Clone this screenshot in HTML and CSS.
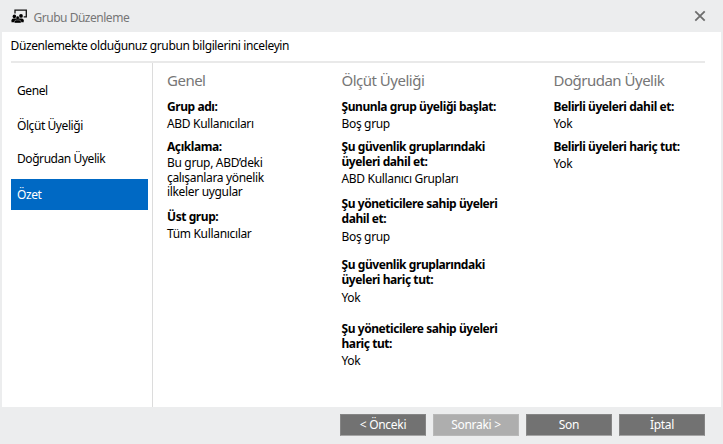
FILE: index.html
```html
<!DOCTYPE html>
<html lang="tr">
<head>
<meta charset="utf-8">
<title>Grubu Düzenleme</title>
<link rel="stylesheet" href="styles.css">
</head>
<body>
<div class="dialog">
  <header class="titlebar">
    <svg class="group-icon" width="17" height="16" viewBox="0 0 17 16">
      <path d="M4 5.5V2.2H15.3v6.6h-2.6" fill="none" stroke="#111" stroke-width="1.3"/>
      <circle cx="3.4" cy="8.4" r="1.8"/><circle cx="10" cy="7.9" r="1.9"/><circle cx="6.7" cy="9.8" r="1.7" stroke="#ecedee" stroke-width=".4"/>
      <path d="M.5 14.2v-2Q.6 10.6 2.3 10.6h8.6q1.7 0 1.8 1.6v2z"/>
      <path d="M3.4 15v-1.2q.2-1.8 2-1.8h2.6q1.8 0 2 1.8V15z" stroke="#ecedee" stroke-width=".4"/>
    </svg>
    <h1>Grubu Düzenleme</h1>
    <svg class="close" width="12" height="12" viewBox="0 0 12 12"><path d="M1.3 1.3l9.4 9.4M10.7 1.3l-9.4 9.4" stroke="#6d6d6d" stroke-width="1.8"/></svg>
  </header>
  <main class="content">
    <p class="intro">Düzenlemekte olduğunuz grubun bilgilerini inceleyin</p>
    <div class="body">
      <nav>
        <a class="general">Genel</a>
        <a class="criteria">Ölçüt Üyeliği</a>
        <a class="direct">Doğrudan Üyelik</a>
        <a class="selected">Özet</a>
      </nav>
      <section class="col-general">
        <h2>Genel</h2>
        <dl><dt>Grup adı:</dt><dd>ABD Kullanıcıları</dd></dl>
        <dl><dt>Açıklama:</dt><dd class="multi">Bu grup, ABD’deki<br>çalışanlara yönelik<br>ilkeler uygular</dd></dl>
        <dl><dt>Üst grup:</dt><dd>Tüm Kullanıcılar</dd></dl>
      </section>
      <section class="col-criteria">
        <h2>Ölçüt Üyeliği</h2>
        <dl><dt>Şununla grup üyeliği başlat:</dt><dd>Boş grup</dd></dl>
        <dl class="include"><dt>Şu güvenlik gruplarındaki<br>üyeleri dahil et:</dt><dd>ABD Kullanıcı Grupları</dd></dl>
        <dl class="managers"><dt>Şu yöneticilere sahip üyeleri<br>dahil et:</dt><dd>Boş grup</dd></dl>
        <dl class="exclude"><dt>Şu güvenlik gruplarındaki<br>üyeleri hariç tut:</dt><dd>Yok</dd></dl>
        <dl class="exclude-managers"><dt>Şu yöneticilere sahip üyeleri<br>hariç tut:</dt><dd>Yok</dd></dl>
      </section>
      <section class="col-direct">
        <h2>Doğrudan Üyelik</h2>
        <dl><dt>Belirli üyeleri dahil et:</dt><dd>Yok</dd></dl>
        <dl><dt>Belirli üyeleri hariç tut:</dt><dd>Yok</dd></dl>
      </section>
    </div>
  </main>
  <footer>
    <button>&lt; Önceki</button>
    <button class="disabled">Sonraki &gt;</button>
    <button>Son</button>
    <button>İptal</button>
  </footer>
</div>
</body>
</html>
```
FILE: styles.css
```css
* { box-sizing: border-box; margin: 0; padding: 0; }
body { font: 12px/15px "Noto Sans", "Open Sans", sans-serif; color: #000; letter-spacing: -0.38px; }
.dialog { width: 723px; height: 444px; background: #ecedee; display: flex; flex-direction: column; overflow: hidden; }
.titlebar { height: 32px; display: flex; align-items: center; padding: 0 17px 0 11px; }
.group-icon { flex: none; }
h1 { font-size: 12px; font-weight: 400; color: #767676; margin: 3px auto 0 5.5px; letter-spacing: -0.48px; }
.content { height: 375px; background: #fff; margin: 0 2px; padding: 0 16px 0 8.5px; display: flex; flex-direction: column; }
.intro { height: 29px; line-height: 28px; white-space: nowrap; flex: none; }
.body { border-top: 2px solid #e9e9e9; display: flex; height: 346px; white-space: nowrap; }
nav { width: 142px; border-right: 1px solid #dcdcdc; padding: 12px 4px 0 0; flex: none; display: flex; flex-direction: column; }
nav a { display: flex; align-items: center; height: 31px; padding-left: 6.5px; flex: none; letter-spacing: -0.43px; }
.criteria { margin-top: 4px; }
.direct { margin-top: 2px; }
.selected { margin-top: 5px; background: #0069c4; color: #fff; }
section { flex: none; padding-top: 7px; }
.col-general { width: 174.5px; padding-left: 14.5px; }
.col-criteria { width: 212px; padding-left: 14.5px; }
.col-direct { padding-left: 14.5px; }
h2 { font-size: 15px; font-weight: 400; color: #767676; line-height: 20px; height: 29px; letter-spacing: -0.5px; }
dl { margin-bottom: 8px; }
dt { font-weight: 700; letter-spacing: -0.43px; }
dd { padding-top: 2px; letter-spacing: -0.33px; }
.multi { line-height: 14.5px; padding-bottom: 1px; }
.include { margin-bottom: 10px; }
.managers { margin-bottom: 13px; }
.managers dd, .exclude dd { padding-top: 3px; }
.exclude { margin-bottom: 16px; }
footer { height: 37px; display: flex; gap: 7px; justify-content: flex-end; align-items: flex-start; padding: 7px 18px 0 0; }
button { width: 86px; height: 22px; font: inherit; letter-spacing: -0.3px; background: #727272; color: #fff; border: 1px solid #858585; border-bottom-color: #a5a5a5; line-height: 20px; }
.disabled { background: #aeaeae; border-color: #b8b8b8; }
```
